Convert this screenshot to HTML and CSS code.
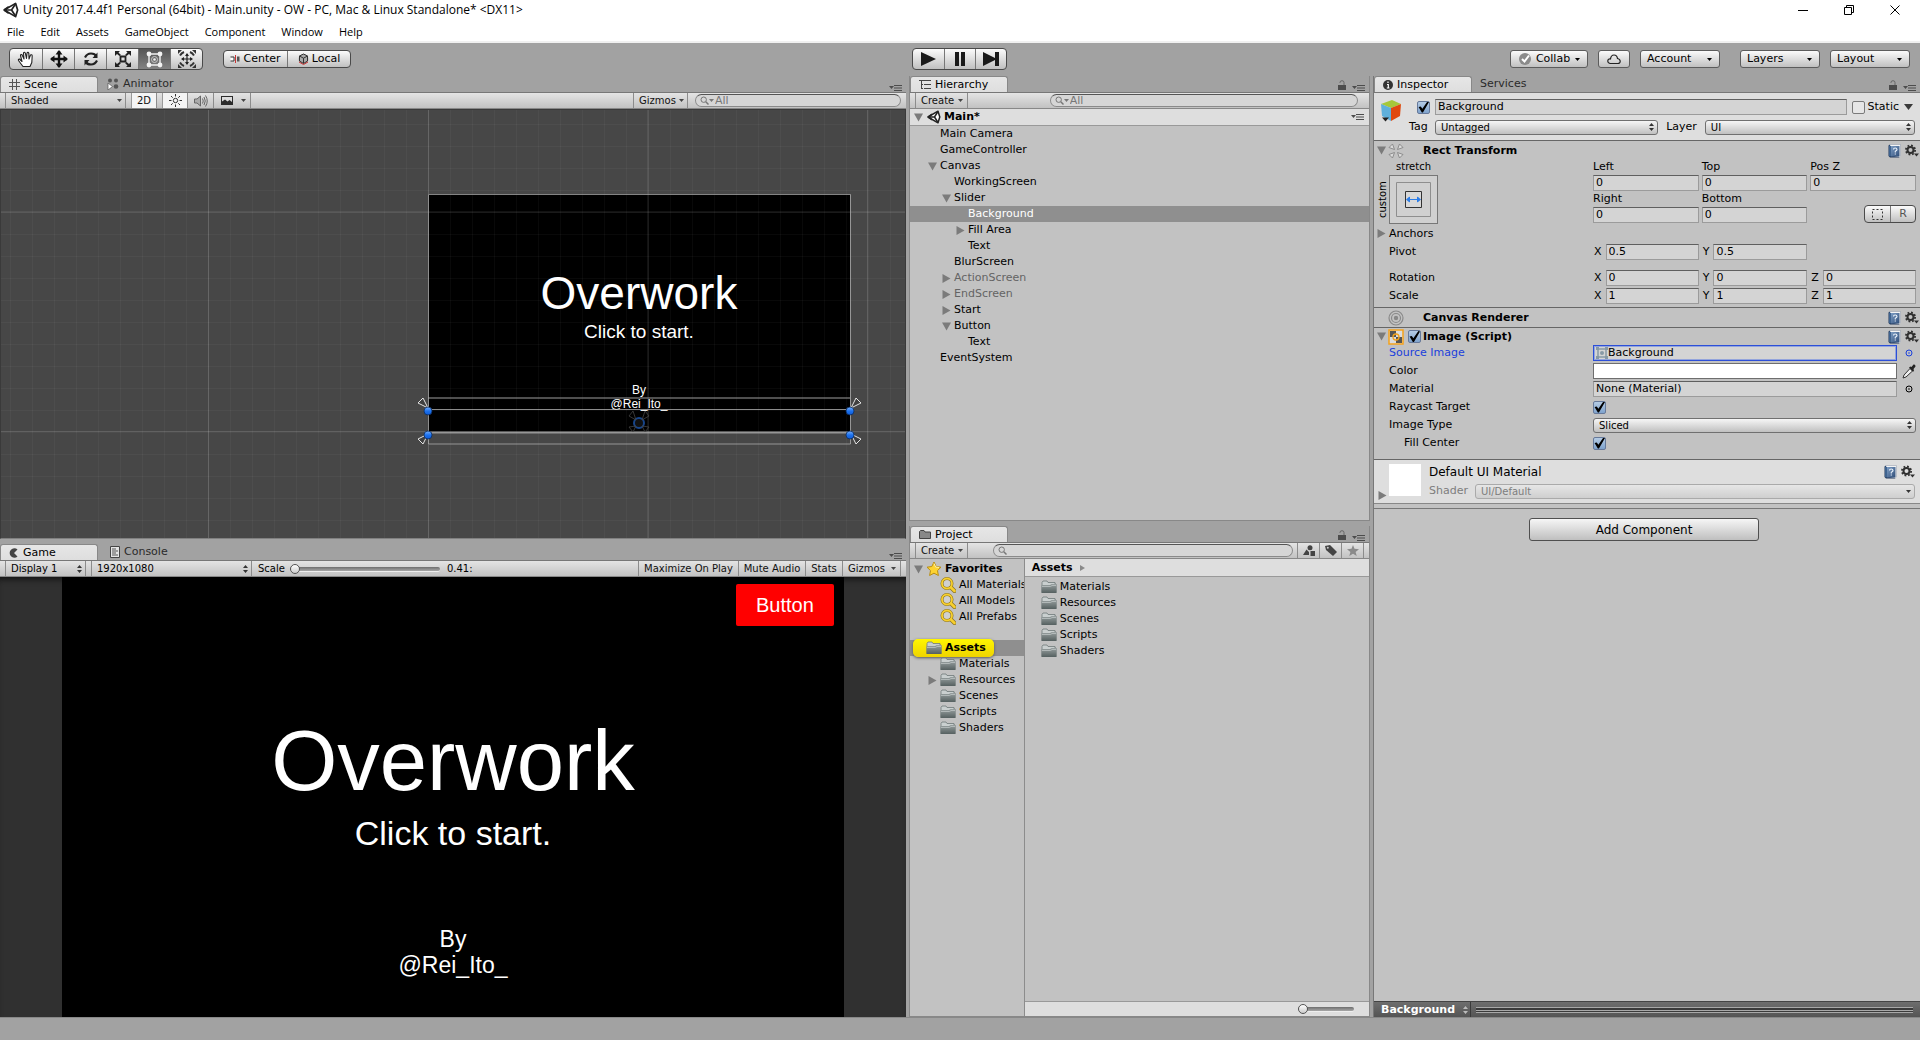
FILE: index.html
```html
<!DOCTYPE html>
<html lang="en">
<head>
<meta charset="utf-8">
<title>Unity 2017.4.4f1 Personal (64bit) - Main.unity</title>
<link rel="stylesheet" href="styles.css">
</head>
<body>
<svg class="defs" aria-hidden="true">
  <defs>
    <linearGradient id="gFolder" x1="0" y1="0" x2="0" y2="1"><stop offset="0" stop-color="#98a0a0"/><stop offset="1" stop-color="#556060"/></linearGradient>
    <linearGradient id="gBook" x1="0" y1="0" x2="1" y2="1"><stop offset="0" stop-color="#7d9dc4"/><stop offset="1" stop-color="#2f4d78"/></linearGradient>
    <linearGradient id="gDot" x1="0" y1="0" x2="0" y2="1"><stop offset="0" stop-color="#7db4ff"/><stop offset=".5" stop-color="#1d72ee"/><stop offset="1" stop-color="#0c5ad8"/></linearGradient>
    <symbol id="unity" viewBox="0 0 14 14"><path fill="#fff" stroke="#222" stroke-width="1.5" stroke-linejoin="round" d="M1 7 11 1.200 12.800 7 11 12.800Z"/><path fill="none" stroke="#222" stroke-width="1.500" d="M1 7H7.500L11 1.500M7.500 7 11 12.500M1 7 5 4.200M1 7 5 9.800"/></symbol>
    <symbol id="down" viewBox="0 0 5 3"><path d="M0 0H5L2.500 3Z" fill="currentColor"/></symbol>
    <symbol id="updown" viewBox="0 0 5 8"><path d="M2.500 0 5 3H0ZM0 5H5L2.500 8Z" fill="currentColor"/></symbol>
    <symbol id="fold" viewBox="0 0 9 9"><path d="M0 .500H9L4.500 8.500Z" fill="#7b7b7b"/></symbol>
    <symbol id="unfold" viewBox="0 0 9 9"><path d="M.500 0 8.500 4.500.500 9Z" fill="#7b7b7b"/></symbol>
    <symbol id="panemenu" viewBox="0 0 13 7"><path d="M0 2H5L2.500 5ZM5 1H13V2H5ZM5 3.500H13V4.500H5ZM5 6H13V7H5Z" fill="#4c4c4c"/></symbol>
    <symbol id="lock" viewBox="0 0 8 10"><path d="M0 5H8V10H0Z" fill="#4c4c4c"/><path d="M2 3V2.500Q2 .700 4 .700T6 2.500V5" fill="none" stroke="#666"/></symbol>
    <symbol id="folder" viewBox="0 0 16 14"><path d="M1 2.500 2 1H6L7 2.500H14V4H15V12.500H1Z" fill="#c9cfcf" stroke="#6f7979" stroke-width=".8"/><path d="M.500 5H9L10.500 4H15.500V13H.500Z" fill="url(#gFolder)"/><path d="M1 6.500H9.500L11 5.500H15" fill="none" stroke="#c4caca" stroke-width=".7"/></symbol>
    <symbol id="search" viewBox="0 0 9 9"><circle cx="3.700" cy="3.700" r="2.700" fill="none" stroke="currentColor"/><path d="m5.800 5.800 2.700 2.700" stroke="currentColor" stroke-width="1.500"/></symbol>
    <symbol id="find" viewBox="0 0 16 16"><circle cx="7" cy="6.500" r="5" fill="#ddd" fill-opacity=".5" stroke="#8c7520" stroke-width="3"/><path d="m11 10.500 3.500 3.500" stroke="#8c7520" stroke-width="4" stroke-linecap="round"/><circle cx="7" cy="6.500" r="5" fill="none" stroke="#f7cf2e" stroke-width="1.800"/><path d="m11 10.500 3.500 3.500" stroke="#f7cf2e" stroke-width="2.500" stroke-linecap="round"/></symbol>
    <symbol id="star" viewBox="0 0 16 16"><path d="M8 1 10.200 5.500 15 6.200 11.500 9.600 12.400 14.500 8 12.200 3.600 14.500 4.500 9.600 1 6.200 5.800 5.500Z" fill="#fdd331" stroke="#b98e14" stroke-width="1" stroke-linejoin="round"/><path d="M8 2.500 9.600 6 13 6.500" stroke="#fff3a8" fill="none"/></symbol>
    <symbol id="book" viewBox="0 0 13 14"><path d="M.500 1.500 2 .500H12.500V12L11 13.500H2L.500 12Z" fill="#22395c"/><path d="M2 .500H12.500V12L12 13 3 11.500Z" fill="#f4f4f4"/><path d="M3 2H11.500V12.500H3Z" fill="url(#gBook)"/><path d="M1 1.500 3 2V12.500L1 12Z" fill="#3f638f"/><path d="M5.500 5.500Q5.500 4 7.200 4T9 5.500Q9 6.500 7.300 7.300V8.500M7.300 9.500V10.500" fill="none" stroke="#e8f0fa" stroke-width="1.200"/></symbol>
    <symbol id="gear" viewBox="0 0 14 14"><circle cx="5.500" cy="6" r="3" fill="none" stroke="#303030" stroke-width="2"/><circle cx="5.500" cy="6" r="4.600" fill="none" stroke="#303030" stroke-width="1.800" stroke-dasharray="1.800 1.810"/><path d="M9 9.500H14L11.500 12.500Z" fill="#303030"/></symbol>
    <symbol id="target" viewBox="0 0 8 8"><circle cx="4" cy="4" r="3" fill="none" stroke="currentColor"/><circle cx="4" cy="4" r=".8" fill="currentColor"/></symbol>
    <symbol id="corner" viewBox="0 0 12 12"><path d="M11 11 1 6 6 1Z" fill="#383838" fill-opacity=".4" stroke="#e4e4e4"/></symbol>
  </defs>
</svg>

<header class="titlebar">
  <svg class="i16"><use href="#unity"/></svg>
  <h1>Unity 2017.4.4f1 Personal (64bit) - Main.unity - OW - PC, Mac &amp; Linux Standalone* &lt;DX11&gt;</h1>
  <div class="winctl">
    <button aria-label="Minimize"><svg width="10" height="10"><path d="M0 5.500H10" stroke="#000"/></svg></button>
    <button aria-label="Restore"><svg width="10" height="10"><path d="M.500 2.500H7.500V9.500H.500ZM2.500 2.500V.500H9.500V7.500H7.500" fill="none" stroke="#000"/></svg></button>
    <button aria-label="Close"><svg width="10" height="10"><path d="M.500.500 9.500 9.500M9.500.500.500 9.500" stroke="#000"/></svg></button>
  </div>
</header>
<nav class="menubar">
  <button>File</button><button>Edit</button><button>Assets</button><button>GameObject</button><button>Component</button><button>Window</button><button>Help</button>
</nav>

<div class="toolbar">
  <div class="zone">
    <div class="group tools">
      <button aria-label="Hand"><svg width="18" height="17" viewBox="0 0 18 17"><path d="M6 15.500 1.500 9.500Q1 8 2.500 8L5 10.500 3.500 4.500Q3.700 3 5 3.800L7 8 6.500 2Q7.200.500 8.300 2L9.500 7.500 10 2Q11 .700 11.800 2.200L12 8 13.500 4Q15 3.200 15.200 4.800L14.800 11.500 13 15.500Z" fill="#fff" stroke="#222" stroke-width="1.100" stroke-linejoin="round"/></svg></button>
      <button aria-label="Move"><svg width="18" height="18" viewBox="0 0 18 18"><path d="M9 1V17M1 9H17" stroke="#111" stroke-width="2.400"/><path d="M9 0 12.500 4.500H5.500ZM9 18 12.500 13.500H5.500ZM0 9 4.500 5.500V12.500ZM18 9 13.500 5.500V12.500Z" fill="#111"/></svg></button>
      <button aria-label="Rotate"><svg width="16" height="16" viewBox="0 0 16 16"><path d="M2 6.500Q4 2.500 8 2.500T13 5M14 9.500Q12 13.500 8 13.500T3 11" fill="none" stroke="#222" stroke-width="2.200"/><path d="M14.500 1.500V7H9.500ZM1.500 14.500V9H6.500Z" fill="#222"/></svg></button>
      <button aria-label="Scale"><svg width="18" height="16" viewBox="0 0 18 16"><path d="M6.500 5.500H11.500V10.500H6.500Z" fill="none" stroke="#222" stroke-width="1.800"/><path d="M1 0H6L4.500 1.500 7 4 5.500 5 3 3 1 5ZM17 0H12L13.500 1.500 11 4 12.500 5 15 3 17 5ZM1 16H6L4.500 14.500 7 12 5.500 11 3 13 1 11ZM17 16H12L13.500 14.500 11 12 12.500 11 15 13 17 11Z" fill="#222"/></svg></button>
      <button class="on" aria-label="Rect"><svg width="17" height="17" viewBox="0 0 17 17"><path d="M3 3H14V14H3Z" fill="none" stroke="#f2f2f2" stroke-width="1.400"/><g fill="#f2f2f2"><circle cx="3" cy="3" r="2.400"/><circle cx="14" cy="3" r="2.400"/><circle cx="3" cy="14" r="2.400"/><circle cx="14" cy="14" r="2.400"/><circle cx="8.500" cy="8.500" r="1.300"/></g><circle cx="8.500" cy="8.500" r="3" fill="none" stroke="#c8c8c8"/></svg></button>
      <button aria-label="Transform"><svg width="20" height="18" viewBox="0 0 20 18"><path d="M10 4V14M5 9H15" stroke="#222" stroke-width="1.200"/><path d="M10 3 12 6H8ZM10 15 12 12H8ZM4 9 7 7V11ZM16 9 13 7V11Z" fill="#222"/><path d="M3 5.500Q4.500 3 7 2M13 2Q15.500 3 17 5.500M17 12.500Q15.500 15 13 16M7 16Q4.500 15 3 12.500" fill="none" stroke="#333" stroke-width="2"/><path d="M1 0H5L1 4ZM19 0H15L19 4ZM1 18H5L1 14ZM19 18H15L19 14Z" fill="#333"/></svg></button>
    </div>
    <div class="group pivot">
      <button><svg width="10" height="8" viewBox="0 0 10 8"><path d="M.500 2H4V6H.500" fill="#fff" stroke="#333"/><path d="M5.500 0V8" stroke="#c33"/><path d="M7 1.500H9.500V6.500H7Z" fill="#555"/></svg>Center</button>
      <button><svg width="11" height="12" viewBox="0 0 11 12"><circle cx="5.500" cy="6" r="5" fill="#666" fill-opacity=".35"/><path d="M5.500 1 9.500 3V8L5.500 10.500 1.500 8V3Z" fill="#aaa" stroke="#333"/><path d="M1.500 3 5.500 5.200 9.500 3M5.500 5.200V10" fill="none" stroke="#333"/><path d="M1 9 5.500 11.500 10 9" fill="none" stroke="#c33"/></svg>Local</button>
    </div>
  </div>
  <div class="group play">
    <button aria-label="Play"><svg width="15" height="14"><path d="M0 0 15 7 0 14Z" fill="#1a1a1a"/></svg></button>
    <button aria-label="Pause"><svg width="10" height="14"><path d="M0 0H4V14H0ZM6 0H10V14H6Z" fill="#1a1a1a"/></svg></button>
    <button aria-label="Step"><svg width="16" height="14"><path d="M0 0 12 6V0H16V14H12V8L0 14Z" fill="#1a1a1a"/></svg></button>
  </div>
  <div class="zone end">
    <button class="tb collab"><svg width="12" height="12" viewBox="0 0 12 12"><circle cx="6" cy="6" r="6" fill="#8b8b8b"/><path d="M3 6 5.500 8.500 10 2.500" fill="none" stroke="#fff" stroke-width="2"/></svg>Collab<svg class="dn"><use href="#down"/></svg></button>
    <button class="tb cloud" aria-label="Cloud services"><svg width="14" height="11" viewBox="0 0 14 11"><path d="M3 9.500Q.500 9 .800 6.800T3.500 5Q4 1 7 1T10.500 4.500Q13.200 5 13.200 7.300T10.500 9.500Z" fill="none" stroke="#222" stroke-width="1.200"/></svg></button>
    <button class="tb wide">Account<svg class="dn"><use href="#down"/></svg></button>
    <button class="tb wide far">Layers<svg class="dn"><use href="#down"/></svg></button>
    <button class="tb wide">Layout<svg class="dn"><use href="#down"/></svg></button>
  </div>
</div>

<main class="docks">
  <div class="col">
    <section class="dock scene">
      <div class="tabs">
        <button class="tab on"><svg width="11" height="11"><path d="M3.500 0V11M7.500 0V11M0 3.500H11M0 7.500H11" stroke="#555"/></svg>Scene</button>
        <button class="tab"><svg width="12" height="12" viewBox="0 0 12 12"><g fill="#555"><circle cx="3" cy="2.500" r="2"/><circle cx="9" cy="2.500" r="2"/><circle cx="9" cy="8.500" r="2.300"/></g><path d="M1 5 5.500 8.500 1 12Z" fill="#fff" stroke="#555" stroke-width=".7"/></svg>Animator</button>
        <svg class="pm"><use href="#panemenu"/></svg>
      </div>
      <div class="strip">
        <button class="sb shaded">Shaded<svg class="dn"><use href="#down"/></svg></button>
        <button class="sb lit b2d">2D</button>
        <button class="sb lit sun" aria-label="Lighting"><svg width="13" height="13" viewBox="0 0 13 13"><circle cx="6.500" cy="6.500" r="2.200" fill="none" stroke="#333"/><path d="M6.500 0V2.500M6.500 10.500V13M0 6.500H2.500M10.500 6.500H13M2 2 3.700 3.700M9.300 9.300 11 11M11 2 9.300 3.700M3.700 9.300 2 11" stroke="#333"/></svg></button>
        <button class="sb aud" aria-label="Audio"><svg width="14" height="12" viewBox="0 0 14 12"><path d="M.500 4H3L6.500 1V11L3 8H.500Z" fill="#aaa" stroke="#666"/><path d="M8.500 3.500Q10 6 8.500 8.500M10 2Q12.500 6 10 10M11.500.500Q15 6 11.500 11.500" fill="none" stroke="#666"/></svg></button>
        <button class="sb fx" aria-label="Effects"><svg width="12" height="9" viewBox="0 0 12 9"><path d="M0 0H12V9H0Z" fill="#2b2b2b"/><path d="M1 5.500 4 3.500 6.500 5.500 8.500 4 11 6V1H1Z" fill="#ddd"/></svg><svg class="dn"><use href="#down"/></svg></button>
        <span class="grow"></span>
        <button class="sb giz">Gizmos<svg class="dn"><use href="#down"/></svg></button>
        <label class="find"><svg class="sr"><use href="#search"/></svg><svg class="dn"><use href="#down"/></svg><input type="text" placeholder="All" aria-label="Search scene"></label>
      </div>
      <svg class="viewport" viewBox="1 110 904 428" preserveAspectRatio="xMidYMid slice">
        <defs>
          <pattern id="minor" width="22" height="22" x="10" y="14" patternUnits="userSpaceOnUse"><path d="M0 .500H22M.500 0V22" stroke="#fff" stroke-opacity=".035"/></pattern>
        </defs>
        <rect x="0" y="109" width="906" height="430" fill="#474747"/>
        <rect x="428" y="194" width="422" height="238" fill="#000"/>
        <g fill="#fff" font-family="Liberation Sans, Arial, sans-serif" text-anchor="middle">
          <text x="639" y="309" font-size="46">Overwork</text>
          <text x="639" y="338" font-size="19">Click to start.</text>
          <text x="639" y="394" font-size="12">By</text>
          <text x="639" y="408" font-size="12">@Rei_Ito_</text>
        </g>
        <rect x="0" y="109" width="906" height="430" fill="url(#minor)"/>
        <path d="M208.500 109V539M428.500 109V539M648 109V539M867.500 109V539M0 212H906M0 431.500H906" stroke="#fff" stroke-opacity=".14" fill="none"/>
        <g fill="none" stroke="#b0b0b0" stroke-opacity=".75">
          <path d="M428.500 194.500H850.500V444H428.500Z"/>
          <path d="M428 398H850" stroke-width="2" stroke-opacity=".45"/>
          <path d="M428 409.500H850" stroke="#bbb"/>
          <path d="M428 432.500H850" stroke-width="2"/>
        </g>
        <use href="#corner" x="417" y="397" width="12" height="12"/>
        <use href="#corner" transform="translate(862 397) scale(-1 1)" width="12" height="12"/>
        <use href="#corner" transform="translate(417 445) scale(1 -1)" width="12" height="12"/>
        <use href="#corner" transform="translate(862 445) scale(-1 -1)" width="12" height="12"/>
        <g fill="url(#gDot)" stroke="#0d2c5c" stroke-width=".8"><circle cx="428" cy="411" r="4"/><circle cx="850" cy="411" r="4"/><circle cx="428" cy="435" r="4"/><circle cx="850" cy="435" r="4"/></g>
        <circle cx="639" cy="423" r="5" fill="#111" stroke="#17458a" stroke-width="2"/>
        <path d="M636 420 629 416 633 411ZM642 420 649 416 645 411ZM636 426 629 427 633 432ZM642 426 649 427 645 432Z" fill="none" stroke="#444" stroke-width=".8"/>
      </svg>
    </section>

    <section class="dock game">
      <div class="tabs">
        <button class="tab on"><svg width="10" height="10" viewBox="0 0 10 10"><path d="M8.500 1.500A4.700 4.700 0 1 0 8.500 8.500L5 5Z" fill="#444"/></svg>Game</button>
        <button class="tab con"><svg width="10" height="12" viewBox="0 0 10 12"><path d="M.500.500H9.500V11.500H.500Z" fill="#e4e4e4" stroke="#444"/><path d="M2 3H6M2 5H8M2 7H6M2 9H8" stroke="#555"/></svg>Console</button>
        <svg class="pm"><use href="#panemenu"/></svg>
      </div>
      <div class="strip">
        <div class="sel disp"><select aria-label="Display"><option>Display 1</option></select><svg class="ud"><use href="#updown"/></svg></div>
        <div class="sel res"><select aria-label="Resolution"><option>1920x1080</option></select><svg class="ud"><use href="#updown"/></svg></div>
        <label class="scale">Scale<input type="range" min="0" max="100" value="0"></label>
        <span class="ratio">0.41:</span>
        <span class="grow"></span>
        <button class="sb maxp">Maximize On Play</button>
        <button class="sb mute">Mute Audio</button>
        <button class="sb stats">Stats</button>
        <button class="sb ggiz">Gizmos<svg class="dn"><use href="#down"/></svg></button>
      </div>
      <div class="player">
        <div class="stage">
          <button class="red">Button</button>
          <p class="big">Overwork</p>
          <p class="mid">Click to start.</p>
          <p class="by">By<br>@Rei_Ito_</p>
        </div>
      </div>
    </section>
  </div>

  <div class="col">
    <section class="dock hier">
      <div class="tabs">
        <button class="tab on"><svg width="12" height="9" viewBox="0 0 12 9"><path d="M0 .500H2M3 .500H12M3 4.500H4M5 4.500H12M3 8.500H4M5 8.500H12M2.500 0V9" stroke="#444"/></svg>Hierarchy</button>
        <svg class="lk"><use href="#lock"/></svg><svg class="pm"><use href="#panemenu"/></svg>
      </div>
      <div class="strip">
        <button class="sb create">Create<svg class="dn"><use href="#down"/></svg></button>
        <span class="pad"></span>
        <label class="find wide"><svg class="sr"><use href="#search"/></svg><svg class="dn"><use href="#down"/></svg><input type="text" placeholder="All" aria-label="Search hierarchy"></label>
      </div>
      <div class="scenerow"><svg class="ar"><use href="#fold"/></svg><svg class="i14"><use href="#unity"/></svg><b>Main*</b><svg class="pm"><use href="#panemenu"/></svg></div>
      <ul class="tree">
        <li class="l1">Main Camera</li>
        <li class="l1">GameController</li>
        <li class="l1"><svg class="ar"><use href="#fold"/></svg>Canvas</li>
        <li class="l2">WorkingScreen</li>
        <li class="l2"><svg class="ar"><use href="#fold"/></svg>Slider</li>
        <li class="l3 picked">Background</li>
        <li class="l3"><svg class="ar"><use href="#unfold"/></svg>Fill Area</li>
        <li class="l3">Text</li>
        <li class="l2">BlurScreen</li>
        <li class="l2 off"><svg class="ar"><use href="#unfold"/></svg>ActionScreen</li>
        <li class="l2 off"><svg class="ar"><use href="#unfold"/></svg>EndScreen</li>
        <li class="l2"><svg class="ar"><use href="#unfold"/></svg>Start</li>
        <li class="l2"><svg class="ar"><use href="#fold"/></svg>Button</li>
        <li class="l3">Text</li>
        <li class="l1">EventSystem</li>
      </ul>
    </section>

    <section class="dock proj">
      <div class="tabs">
        <button class="tab on"><svg width="12" height="9" viewBox="0 0 12 9"><path d="M.500 8.500V1.500L1.500.500H5L6 2H11.500V8.500Z" fill="#888" stroke="#444"/></svg>Project</button>
        <svg class="lk"><use href="#lock"/></svg><svg class="pm"><use href="#panemenu"/></svg>
      </div>
      <div class="strip">
        <button class="sb create">Create<svg class="dn"><use href="#down"/></svg></button>
        <label class="find fill"><svg class="sr"><use href="#search"/></svg><input type="text" aria-label="Search project"></label>
        <button class="sb ic" aria-label="Filter by type"><svg width="12" height="11" viewBox="0 0 12 11"><path d="M3.500 4.500 0 10H6V7ZM7.500 6H12V11H7.500Z" fill="#444"/><circle cx="7" cy="2.700" r="2.500" fill="#444"/></svg></button>
        <button class="sb ic" aria-label="Filter by label"><svg width="12" height="11" viewBox="0 0 12 11"><path d="M0 1 5 0 12 7 8 11 1 5Z" fill="#444"/><circle cx="2.800" cy="2.800" r="1" fill="#ccc"/></svg></button>
        <button class="sb ic last" aria-label="Save search"><svg width="12" height="11" viewBox="0 0 12 11"><path d="M6 0 7.500 3.800 12 4.200 8.600 7 9.700 11 6 8.800 2.300 11 3.400 7 0 4.200 4.500 3.800Z" fill="#8a8a8a"/></svg></button>
      </div>
      <div class="browser">
        <div class="side">
          <ul class="tree">
            <li class="l0"><svg class="ar"><use href="#fold"/></svg><svg class="i16"><use href="#star"/></svg><b>Favorites</b></li>
            <li class="l1"><svg class="i16"><use href="#find"/></svg>All Materials</li>
            <li class="l1"><svg class="i16"><use href="#find"/></svg>All Models</li>
            <li class="l1"><svg class="i16"><use href="#find"/></svg>All Prefabs</li>
          </ul>
          <ul class="tree roots">
            <li class="l0 root"><span class="ping"><svg class="fo"><use href="#folder"/></svg><b>Assets</b></span></li>
            <li class="l1"><svg class="fo"><use href="#folder"/></svg>Materials</li>
            <li class="l1"><svg class="ar"><use href="#unfold"/></svg><svg class="fo"><use href="#folder"/></svg>Resources</li>
            <li class="l1"><svg class="fo"><use href="#folder"/></svg>Scenes</li>
            <li class="l1"><svg class="fo"><use href="#folder"/></svg>Scripts</li>
            <li class="l1"><svg class="fo"><use href="#folder"/></svg>Shaders</li>
          </ul>
        </div>
        <div class="files">
          <div class="crumbs"><b>Assets</b><svg width="5" height="6"><path d="M0 0 5 3 0 6Z" fill="#8a8a8a"/></svg></div>
          <ul class="tree list">
            <li><svg class="fo"><use href="#folder"/></svg>Materials</li>
            <li><svg class="fo"><use href="#folder"/></svg>Resources</li>
            <li><svg class="fo"><use href="#folder"/></svg>Scenes</li>
            <li><svg class="fo"><use href="#folder"/></svg>Scripts</li>
            <li><svg class="fo"><use href="#folder"/></svg>Shaders</li>
          </ul>
          <div class="foot"><input type="range" min="0" max="100" value="0" aria-label="Icon size"></div>
        </div>
      </div>
    </section>
  </div>

  <div class="col">
    <section class="dock insp">
      <div class="tabs">
        <button class="tab on"><svg width="10" height="10" viewBox="0 0 10 10"><circle cx="5" cy="5" r="5" fill="#333"/><path d="M5 1.500V3M4 4.500H5.300V8M3.800 8H6.500" fill="none" stroke="#fff" stroke-width="1.200"/></svg>Inspector</button>
        <button class="tab plain">Services</button>
        <svg class="lk"><use href="#lock"/></svg><svg class="pm"><use href="#panemenu"/></svg>
      </div>
      <div class="objhead">
        <svg class="cube" viewBox="0 0 24 24"><path d="M2 5 13 1 22 5 12 9Z" fill="#a6c83a"/><path d="M2 5 12 9V22L3 17Z" fill="#5fb0dc"/><path d="M22 5 12 9V22L21 17Z" fill="#e0480f"/><path d="M3 18.500H10L6.500 22.500Z" fill="#222"/></svg>
        <div class="objrows">
          <div class="r namerow"><input type="checkbox" checked aria-label="Active"><input class="f name" type="text" value="Background" aria-label="Name"><label class="static"><input type="checkbox">Static</label><svg width="9" height="6"><path d="M0 0H9L4.500 6Z" fill="#3a3a3a"/></svg></div>
          <div class="r tagrow"><label for="tag">Tag</label><div class="pop t"><select id="tag"><option>Untagged</option></select><svg class="ud"><use href="#updown"/></svg></div><label for="layer">Layer</label><div class="pop l"><select id="layer"><option>UI</option></select><svg class="ud"><use href="#updown"/></svg></div></div>
        </div>
      </div>

      <div class="comp rt">
        <div class="ch"><svg class="ar"><use href="#fold"/></svg><svg class="ci" viewBox="0 0 16 16"><g fill="#ddd" stroke="#8b8b8b"><path d="M6.500 6.500 1 4.500 4.500 1ZM9.500 6.500 15 4.500 11.500 1ZM6.500 9.500 1 11.500 4.500 15ZM9.500 9.500 15 11.500 11.500 15Z"/></g></svg><h2>Rect Transform</h2><svg class="bk"><use href="#book"/></svg><svg class="gr"><use href="#gear"/></svg></div>
        <div class="rect">
          <div class="anchor">
            <span class="st">stretch</span>
            <span class="cu">custom</span>
            <button class="abox" aria-label="Anchor presets"><svg viewBox="0 0 49 49"><path d="M7.500 7.500H41.500V41.500H7.500Z" fill="none" stroke="#8e8e8e"/><path d="M16.500 16.500H32.500V32.500H16.500Z" fill="#d8d8d8" stroke="#333"/><path d="M18 24.500H31M20.500 22V27M28.500 22V27" stroke="#2b7de9"/><path d="M17 24.500 20.500 21.500V27.500ZM32 24.500 28.500 21.500V27.500Z" fill="#2b7de9"/></svg></button>
          </div>
          <div class="vals">
            <label>Left<input class="f" value="0"></label><label>Top<input class="f" value="0"></label><label>Pos Z<input class="f" value="0"></label>
            <label>Right<input class="f" value="0"></label><label>Bottom<input class="f" value="0"></label>
            <div class="group rr"><button aria-label="Blueprint mode"><svg width="11" height="11"><path d="M.500.500H10.500V10.500H.500Z" fill="none" stroke="#333" stroke-dasharray="2 2"/></svg></button><button>R</button></div>
          </div>
        </div>
        <div class="prop fd"><span><svg class="ar"><use href="#unfold"/></svg>Anchors</span></div>
        <div class="prop"><span>Pivot</span><div class="xyz"><label>X<input class="f" value="0.5"></label><label>Y<input class="f" value="0.5"></label></div></div>
        <div class="prop rot"><span>Rotation</span><div class="xyz"><label>X<input class="f" value="0"></label><label>Y<input class="f" value="0"></label><label>Z<input class="f" value="0"></label></div></div>
        <div class="prop"><span>Scale</span><div class="xyz"><label>X<input class="f" value="1"></label><label>Y<input class="f" value="1"></label><label>Z<input class="f" value="1"></label></div></div>
      </div>

      <div class="comp cr">
        <div class="ch"><span class="ar"></span><svg class="ci" viewBox="0 0 16 16"><g fill="none" stroke="#8a8a8a" stroke-width="1.200"><circle cx="8" cy="8" r="7"/><circle cx="8" cy="8" r="4.500"/></g><circle cx="8" cy="8" r="2.200" fill="#888"/></svg><h2>Canvas Renderer</h2><svg class="bk"><use href="#book"/></svg><svg class="gr"><use href="#gear"/></svg></div>
      </div>

      <div class="comp im">
        <div class="ch tick"><svg class="ar"><use href="#fold"/></svg><svg class="ci" viewBox="0 0 16 16"><path d="M1 1H15V15H1Z" fill="#ddd" stroke="#f5a21b" stroke-width="1.500"/><path d="M2 2H8V8H2ZM8 8H14V14H8Z" fill="#555"/><circle cx="8" cy="8" r="3" fill="none" stroke="#f5a21b" stroke-width="1.300"/></svg><input type="checkbox" checked aria-label="Image enabled"><h2>Image (Script)</h2><svg class="bk"><use href="#book"/></svg><svg class="gr"><use href="#gear"/></svg></div>
        <div class="prop blue"><label for="src">Source Image</label><div class="obj"><div class="fi focus"><svg class="mini" viewBox="0 0 12 12"><path d="M2 2H10V10H2Z" fill="none" stroke="#8799a5" stroke-width="1.500"/><path d="M0 0H3V3H0ZM9 0H12V3H9ZM0 9H3V12H0ZM9 9H12V12H9Z" fill="#8799a5"/><circle cx="6" cy="6" r="2" fill="#8799a5"/></svg><input id="src" value="Background" readonly></div><svg class="tg"><use href="#target"/></svg></div></div>
        <div class="prop"><label for="col">Color</label><div class="obj"><button id="col" class="swatch" aria-label="Color"></button><svg class="dr" viewBox="0 0 14 15"><path d="M1 14 2 11 8 4.500 10.500 7 4 13Z" fill="#eee" stroke="#333"/><path d="m7 3.500 1.500-1 1 .500 2-2.500Q13.500 0 13.500 2.500L11.500 5 12 6.500 11 8Z" fill="#222"/></svg></div></div>
        <div class="prop"><label for="mat">Material</label><div class="obj"><div class="fi"><input id="mat" value="None (Material)" readonly></div><svg class="tg"><use href="#target"/></svg></div></div>
        <div class="prop"><label for="ray">Raycast Target</label><input id="ray" type="checkbox" checked></div>
        <div class="prop"><label for="ity">Image Type</label><div class="pop"><select id="ity"><option>Sliced</option></select><svg class="ud"><use href="#updown"/></svg></div></div>
        <div class="prop ind"><label for="fil">Fill Center</label><input id="fil" type="checkbox" checked></div>
      </div>

      <div class="matbox">
        <svg class="ar"><use href="#unfold"/></svg>
        <div class="prev"></div>
        <div class="mrows">
          <div class="r"><h3>Default UI Material</h3><svg class="bk"><use href="#book"/></svg><svg class="gr"><use href="#gear"/></svg></div>
          <div class="r dim"><label for="sha">Shader</label><div class="pop"><select id="sha" disabled><option>UI/Default</option></select><svg class="dn"><use href="#down"/></svg></div></div>
        </div>
      </div>
      <div class="addwrap"><button class="add">Add Component</button></div>
      <div class="prevbar"><button>Background<svg class="ud"><use href="#updown"/></svg></button><span class="groove"></span></div>
    </section>
  </div>
</main>
<footer class="status"></footer>
</body>
</html>
```
FILE: styles.css
```css
* { box-sizing: border-box; }
html, body { height: 100%; }
body {
  margin: 0;
  display: flex;
  flex-direction: column;
  background: #a2a2a2;
  color: #000;
  font: 11px/16px "DejaVu Sans", Verdana, sans-serif;
  overflow: hidden;
}
button, input, select {
  margin: 0;
  padding: 0;
  border: 0;
  border-radius: 0;
  background: none;
  color: inherit;
  font: inherit;
  outline: 0;
}
select { appearance: none; cursor: pointer; }
h1, h2, h3, p, ul { margin: 0; padding: 0; font-weight: normal; }
svg { flex: none; display: block; }
.defs { position: absolute; width: 0; height: 0; }
.i16 { width: 16px; height: 16px; }
.i14 { width: 14px; height: 14px; }
.dn { width: 5px; height: 3px; }
.ud { width: 5px; height: 8px; }
.ar { width: 9px; height: 9px; }
.grow { flex: 1; }

/* Window chrome */
.titlebar, .menubar { background: #fff; display: flex; align-items: center; flex: none; font-family: "Open Sans", "Segoe UI", sans-serif; }
.titlebar { height: 22px; padding: 0 2px 2px 3px; }
.titlebar h1 { flex: 1; margin-left: 4px; font-size: 12px; }
.winctl { display: flex; }
.winctl button { width: 46px; height: 20px; display: grid; place-items: center; }
.menubar { height: 21px; padding: 1px 0 0 7px; gap: 16px; border-bottom: 2px solid #f0f0f0; font-size: 11px; }

/* Main toolbar */
.toolbar { flex: none; height: 33px; padding: 0 10px 1px 9px; display: grid; grid-template-columns: 1fr auto 1fr; align-items: center; }
.zone { display: flex; align-items: center; gap: 20px; }
.zone.end { justify-content: flex-end; gap: 10px; }
.group { display: flex; border: 1px solid #4a4a4a; border-radius: 4px; background: linear-gradient(#fbfbfb, #c0c0c0); overflow: hidden; }
.group button { display: flex; align-items: center; justify-content: center; gap: 3px; border-left: 1px solid #777; }
.group button:first-child { border-left: 0; }
.tools button, .play button { width: 32px; height: 20px; }
.play button { width: 31px; }
.tools .on { background: linear-gradient(#555, #828282); }
.pivot button { width: 63px; height: 16px; }
.tb { display: flex; align-items: center; height: 18px; padding: 0 7px 0 6px; border: 1px solid #5c5c5c; border-radius: 3px; background: linear-gradient(#fbfbfb, #c0c0c0); justify-content: space-between; }
.collab { width: 78px; padding-left: 8px; }
.cloud { width: 32px; justify-content: center; }
.wide.tb { width: 80px; }
.far { margin-left: 10px; }

/* Dock layout */
.docks { flex: 1; min-height: 0; display: grid; grid-template-columns: 906fr 461fr 547fr; column-gap: 3px; }
.col { min-width: 0; min-height: 0; display: flex; flex-direction: column; gap: 5px; }
.dock { min-height: 0; display: flex; flex-direction: column; }
.scene { flex: 463 1 0; }
.game { flex: 473 1 0; }
.hier { flex: 445 1 0; }
.proj { flex: 491 1 0; }
.insp { flex: 1; }
.tabs { flex: none; height: 16px; display: flex; align-items: flex-end; padding-right: 4px; }
.tab { height: 16px; min-width: 98px; display: flex; align-items: center; gap: 4px; padding-left: 9px; color: #2a2a2a; font-size: 11px; text-align: left; }
.tab.on { background: linear-gradient(#e6e6e6, #dedede); border: 1px solid #888; border-width: 1px 1px 0; border-radius: 3px 3px 0 0; color: #000; padding-left: 8px; }
.tab.plain { padding-left: 8px; }
.tab.con { padding-left: 12px; }
.tabs .pm { margin-left: auto; }
.tabs .lk { margin-left: auto; width: 8px; height: 10px; margin-bottom: 2px; }
.tabs .lk + .pm { margin-left: 6px; }
.pm { width: 13px; height: 7px; margin-bottom: 1px; }
.strip { flex: none; height: 17px; display: flex; align-items: center; padding: 0 5px; border-top: 1px solid #777; border-bottom: 1px solid #888; background: linear-gradient(#e4e4e4, #c2c2c2); font-size: 10px; line-height: 15px; white-space: nowrap; }
.sb { height: 15px; display: flex; align-items: center; justify-content: space-between; border-right: 1px solid #8c8c8c; color: #111; }
.sb .dn { color: #444; }
.shaded { width: 121px; padding: 0 3px 0 5px; border-left: 1px solid #8c8c8c; margin-right: 5px; }
.lit { background: #f4f4f4; }
.b2d { width: 26px; justify-content: center; border-left: 1px solid #999; margin-right: 5px; font-size: 10px; }
.sun { width: 26px; justify-content: center; border-left: 1px solid #999; }
.aud { width: 26px; justify-content: center; }
.fx { width: 37px; padding: 0 4px 0 7px; }
.giz { width: 55px; padding: 0 3px 0 5px; border-left: 1px solid #8c8c8c; margin-right: 7px; }
.find { width: 206px; height: 13px; display: flex; align-items: center; padding-left: 4px; border: 1px solid #8a8a8a; border-top-color: #555; border-radius: 7px; background: #d6d6d6; color: #777; }
.find input { flex: 1; min-width: 0; height: 11px; padding-left: 1px; font-size: 11px; color: #111; }
.find input::placeholder { color: #777; opacity: 1; }
.sr { width: 9px; height: 9px; }
.create { width: 53px; padding: 0 4px 0 5px; border-left: 1px solid #8c8c8c; }
.pad { flex: 83 1 0; }
.find.wide { flex: 307 1 0; margin-right: 6px; }
.find.fill { flex: 1; margin: 0 4px 0 25px; }
.ic { width: 22px; justify-content: center; border-left: 1px solid #8c8c8c; border-right: 0; }
.ic.last { width: 23px; border-right: 1px solid #8c8c8c; }

/* Scene view */
.viewport { flex: 1; min-height: 0; width: 100%; border: 1px solid #3a3a3a; border-bottom-color: #808080; }

/* Game view */
.sel, .pop { display: grid; align-items: center; min-width: 0; }
.sel > *, .pop > * { grid-area: 1 / 1; }
.sel svg, .pop svg { justify-self: end; margin-right: 4px; pointer-events: none; color: #333; }
.sel select { width: 100%; height: 15px; padding-left: 5px; border: 1px solid #8c8c8c; border-width: 0 1px; }
.disp { width: 81px; margin-right: 5px; }
.res { width: 161px; }
.scale { display: flex; align-items: center; gap: 5px; margin-left: 6px; }
.scale input { width: 150px; }
.ratio { margin-left: 7px; }
input[type="range"] { appearance: none; height: 13px; }
input[type="range"]::-webkit-slider-runnable-track { height: 4px; border-radius: 2px; background: linear-gradient(#6e6e6e, #a8a8a8); box-shadow: 0 1px 0 #eee; }
input[type="range"]::-webkit-slider-thumb { appearance: none; width: 10px; height: 10px; margin-top: -3px; border: 1px solid #555; border-radius: 50%; background: linear-gradient(#fff, #ccc); }
.maxp { width: 101px; justify-content: center; border-left: 1px solid #8c8c8c; }
.mute { width: 67px; justify-content: center; }
.stats { width: 37px; justify-content: center; }
.ggiz { width: 58px; padding: 0 4px 0 5px; }
.player { flex: 1; min-height: 0; display: flex; justify-content: center; background: #303030; box-shadow: inset 0 6px 6px -4px #111; }
.stage { width: 86.3%; display: flex; flex-direction: column; align-items: center; background: #000; color: #fff; text-align: center; font-family: "Liberation Sans", Arial, sans-serif; }
.red { align-self: flex-end; width: 98px; height: 42px; margin: 7px 10px 0 0; border-radius: 2px; background: #f00; font-size: 20px; }
.big { margin-top: 85px; font-size: 85px; line-height: 100px; }
.mid { margin-top: 2px; font-size: 34px; line-height: 40px; }
.by { margin-top: 73px; font-size: 23px; line-height: 26px; }

/* Lists and trees */
.hier, .proj { border: 0 solid #888; border-width: 0 1px 1px; background: #c2c2c2; }
.hier .tabs, .proj .tabs, .insp .tabs { background: #a2a2a2; }
.scenerow { flex: none; height: 17px; display: flex; align-items: center; padding: 0 5px 0 4px; background: #dedede; border-bottom: 1px solid #999; }
.scenerow .i14 { margin: 0 3px 0 4px; }
.scenerow .pm { margin-left: auto; }
.tree { list-style: none; }
.tree li { height: 16px; display: flex; align-items: center; gap: 3px; padding-left: 30px; white-space: nowrap; }
.tree .ar { margin-left: -12px; }
.hier .l2 { padding-left: 44px; }
.hier .l3 { padding-left: 58px; }
.tree .picked { background: #8f8f8f; color: #fff; }
.tree .off { color: #646464; }
.browser { flex: 1; min-height: 0; display: grid; grid-template-columns: 115fr 345fr; background: #c2c2c2; }
.side { overflow: hidden; padding-top: 2px; border-right: 1px solid #8c8c8c; }
.side .l0 { padding-left: 16px; }
.roots { margin-top: 15px; }
.tree li .fo, .fo { width: 16px; height: 14px; }
.tree .root { background: #8f8f8f; padding-left: 3px; }
.ping { display: flex; align-items: center; gap: 3px; height: 18px; padding: 0 8px 0 13px; border-radius: 5px; background: linear-gradient(#fff600, #efd400); box-shadow: 0 1px 3px #555; }
.files { min-width: 0; display: flex; flex-direction: column; }
.crumbs { flex: none; height: 18px; display: flex; align-items: center; gap: 7px; padding-left: 7px; background: #dedede; border-bottom: 1px solid #999; }
.tree.list { flex: 1; padding-top: 2px; }
.tree.list li { padding-left: 16px; }
.foot { flex: none; height: 15px; display: flex; align-items: center; justify-content: flex-end; padding-right: 15px; background: #dedede; border-top: 1px solid #999; }
.foot input { width: 56px; }

/* Inspector */
.insp { background: #c2c2c2; border-left: 1px solid #777; }
.objhead { flex: none; height: 49px; display: flex; gap: 14px; padding: 6px 5px 0 5px; border-top: 1px solid #777; border-bottom: 1px solid #666; background: #dedede; }
.cube { width: 24px; height: 24px; }
.objrows { flex: 1; display: flex; flex-direction: column; gap: 4px; min-width: 0; }
.r { display: flex; align-items: center; height: 16px; }
input[type="checkbox"] { appearance: none; flex: none; width: 13px; height: 13px; border: 1px solid #7a7a7a; border-radius: 2px; background: #e6e6e6; display: grid; place-items: center; }
input[type="checkbox"]:checked { background: linear-gradient(#b4cbe4, #7fa3cd); border-color: #66799a; }
input[type="checkbox"]:checked::after { content: ""; width: 11px; height: 11px; background: #000; clip-path: polygon(5% 50%, 25% 45%, 40% 65%, 85% 0, 100% 5%, 45% 100%, 35% 100%); }
.f, .fi { height: 16px; border: 1px solid #9b9b9b; border-top-color: #5f5f5f; background: #d4d4d4; padding-left: 2px; width: 100%; min-width: 0; }
.namerow { margin-right: 2px; }
.name { flex: 1; margin: 0 5px; }
.static { display: flex; align-items: center; gap: 3px; margin-right: 5px; }
.tagrow label:first-child { width: 18px; margin-left: -8px; }
.tagrow { gap: 8px; }
.tagrow .t { flex: 224 1 0; }
.tagrow .l { flex: 211 1 0; }
.pop select { width: 100%; height: 15px; padding-left: 5px; border: 1px solid #707070; border-radius: 3px; background: linear-gradient(#f6f6f6, #c0c0c0); font-size: 10px; line-height: 13px; }
.comp { flex: none; border-bottom: 1px solid #666; padding: 0 4px 3px 15px; display: flex; flex-direction: column; gap: 2px; }
.ch { height: 18px; margin: 0 -4px 0 -12px; display: flex; align-items: center; padding-right: 1px; }
.rt .ch { height: 17px; margin-top: 1px; }
.ci { width: 16px; height: 16px; margin-left: 2px; }
.comp h2 { flex: 1; font-size: 11px; font-weight: bold; margin-left: 19px; }
.tick h2 { margin-left: 2px; }
.tick input { margin-left: 4px; }
.bk { width: 13px; height: 14px; }
.gr { width: 14px; height: 14px; margin-left: 4px; }
.rect { display: grid; grid-template-columns: 204fr 323fr; margin: -2px 0 0; }
.anchor { display: grid; grid-template-columns: 12px 49px; grid-template-rows: 16px 49px; margin-left: -12px; }
.st { grid-column: 2; font-size: 10px; text-align: center; }
.cu { font-size: 10px; line-height: 12px; text-align: center; writing-mode: vertical-rl; rotate: 180deg; }
.abox { border: 1px solid #777; background: #d0d0d0; width: 49px; height: 49px; }
.abox svg { margin: -1px; }
.vals { display: grid; grid-template-columns: 1fr 1fr 1fr; column-gap: 3px; align-content: start; }
.vals label { display: block; height: 32px; }
.vals .f { display: block; }
.rr { justify-self: end; align-self: end; }
.rr button { width: 25px; height: 16px; color: #555; }
.prop { height: 16px; display: grid; grid-template-columns: 204fr 323fr; align-items: center; white-space: nowrap; }
.fd .ar { display: inline-block; margin: 0 3px 0 -12px; vertical-align: -1px; }
.xyz { display: grid; grid-template-columns: 1fr 1fr 1fr; column-gap: 3px; }
.xyz label { display: flex; gap: 4px; min-width: 0; padding-left: 1px; }
.rot { margin-top: 8px; }
.cr { padding-bottom: 0; }
.cr .ch { height: 19px; }
.im { min-height: 132px; }
.im .ch { height: 17px; margin-bottom: -2px; }
.obj { display: flex; align-items: center; }
.fi { flex: 1; display: flex; align-items: center; }
.fi input { flex: 1; min-width: 0; height: 14px; }
.focus { border: 1px solid #2c4fd8; box-shadow: inset 0 0 0 1px #93a4dc; }
.mini { width: 12px; height: 12px; }
.tg { width: 8px; height: 8px; margin: 0 3px 0 8px; }
.dr { width: 14px; height: 15px; margin: 0 0 0 5px; }
.blue { color: #1a3fdc; }
.blue input { color: #000; }
.swatch { flex: 1; height: 16px; border: 1px solid #6e6e6e; background: #fff; }
.ind label { padding-left: 15px; }
.matbox { flex: none; height: 44px; display: flex; padding: 4px 5px 0 4px; background: #dedede; border-bottom: 1px solid #888; }
.matbox > .ar { align-self: flex-end; margin: 0 2px 3px 0; }
.prev { width: 32px; height: 32px; background: #fff; }
.mrows { flex: 1; margin-left: 8px; display: flex; flex-direction: column; gap: 3px; min-width: 0; }
.mrows h3 { flex: 1; font-size: 12px; }
.dim { color: #7d7d7d; gap: 7px; }
.dim .pop { flex: 1; }
.dim select { border-color: #aaa; background: linear-gradient(#e6e6e6, #cfcfcf); opacity: 1; }
.addwrap { flex: 1; margin-top: 4px; padding: 9px 6px 0 0; border-top: 1px solid #777; display: flex; justify-content: center; align-items: flex-start; }
.add { width: 230px; height: 23px; border: 1px solid #4f4f4f; border-radius: 3px; background: linear-gradient(#f6f6f6, #bfbfbf); font-size: 12px; }
.prevbar { flex: none; height: 16px; display: flex; align-items: center; padding: 0 7px; border-top: 1px solid #444; background: linear-gradient(#6e6e6e, #545454); color: #fff; }
.prevbar button { display: flex; align-items: center; justify-content: space-between; width: 90px; height: 15px; border-right: 1px solid #3a3a3a; padding-right: 2px; font-weight: bold; font-size: 11px; }
.prevbar .ud { color: #bbb; }
.groove { flex: 1; height: 6px; margin-left: 5px; border: solid #a8a8a8; border-width: 1px 0; background: linear-gradient(#3a3a3a 2px, #a8a8a8 2px 3px, #3a3a3a 3px); }
.status { flex: none; height: 23px; border-top: 1px solid #888; }
```
